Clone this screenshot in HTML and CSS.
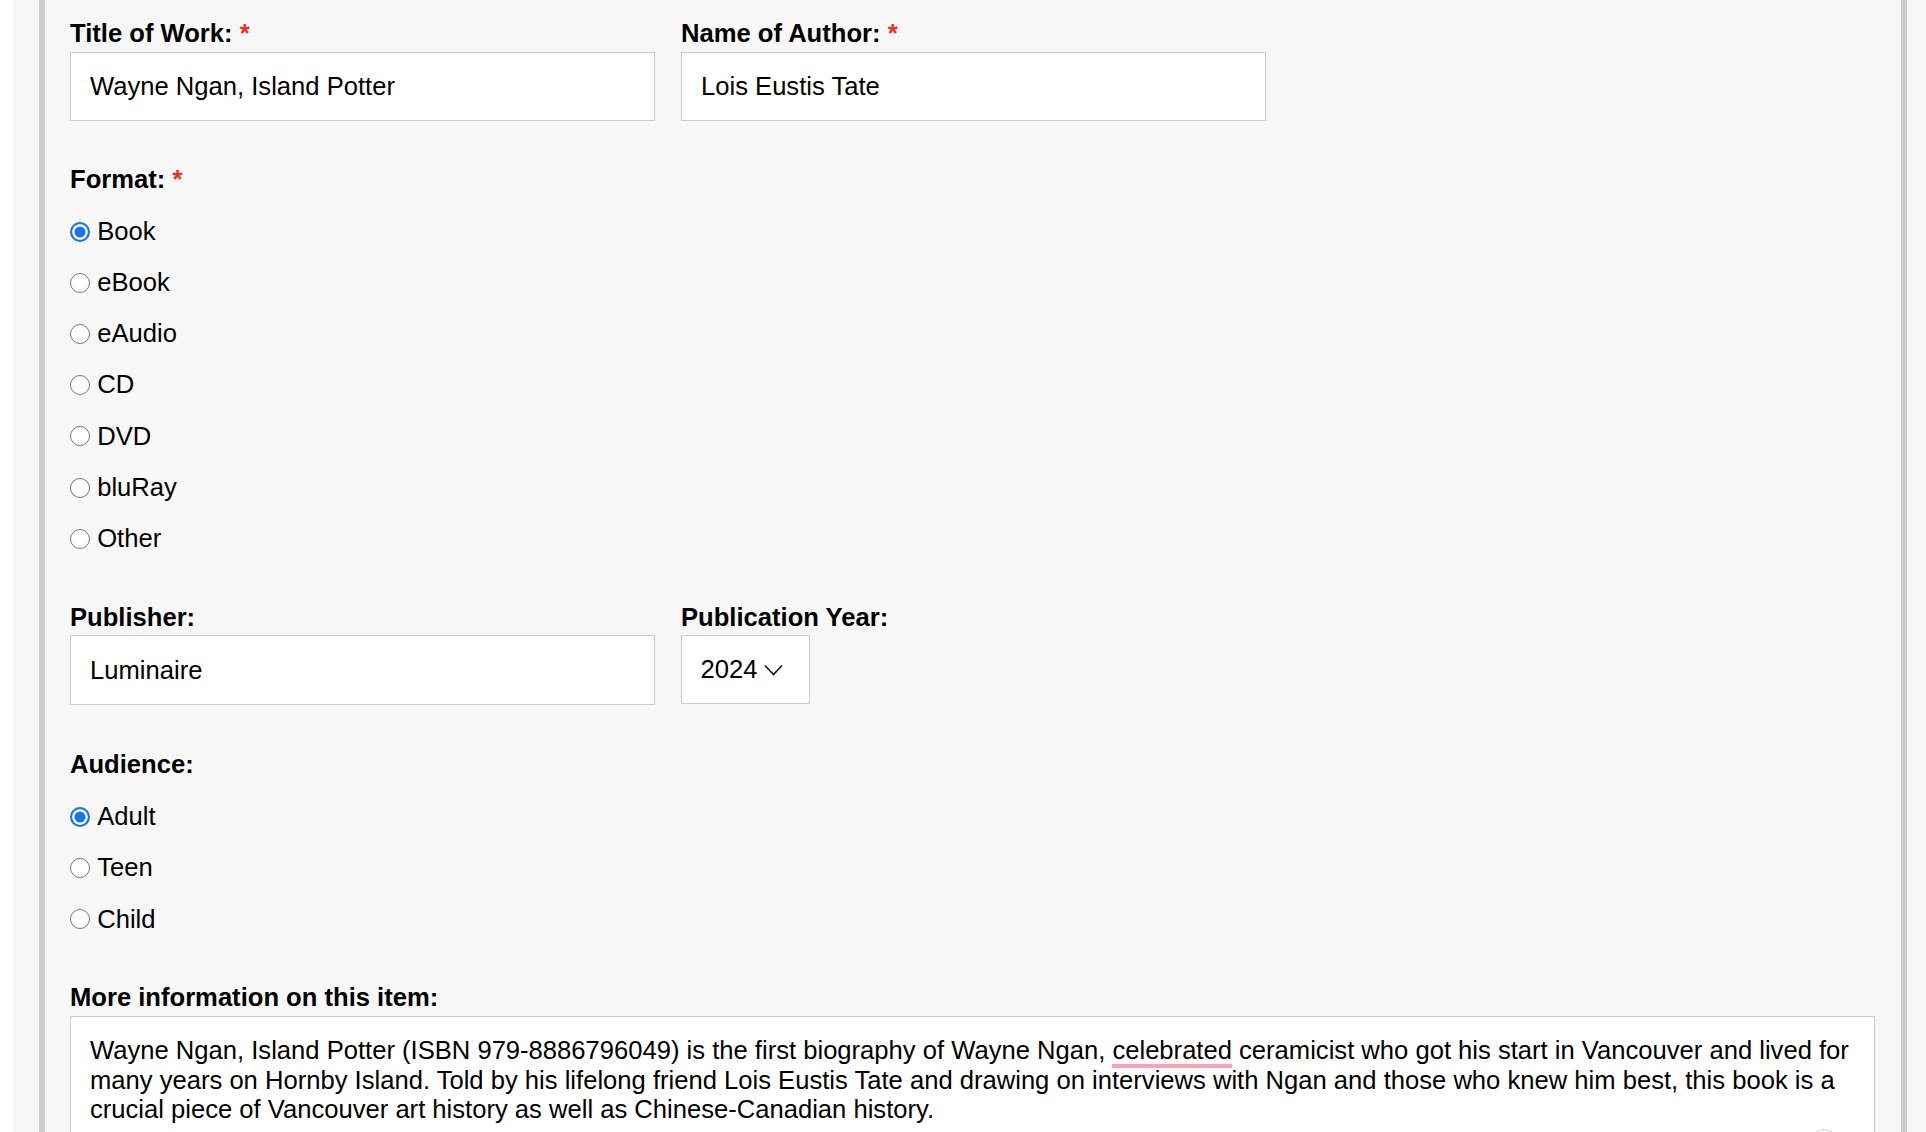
FILE: index.html
```html
<!DOCTYPE html>
<html lang="en">
<head>
    <meta charset="UTF-8">
    <meta name="viewport" content="width=device-width, initial-scale=1.0">
    <title>Suggest an item</title>
    <link rel="stylesheet" href="styles.css">
</head>
<body>
    <div class="page">
        <div class="panel">
            <form class="item-form">
                <div class="row row-first">
                    <div class="field">
                        <label class="field-label" for="title">Title of Work: <span class="req">*</span></label>
                        <input type="text" id="title" class="text-input" value="Wayne Ngan, Island Potter">
                    </div>
                    <div class="field">
                        <label class="field-label" for="author">Name of Author: <span class="req">*</span></label>
                        <input type="text" id="author" class="text-input" value="Lois Eustis Tate">
                    </div>
                </div>

                <div class="group">
                    <div class="field-label">Format: <span class="req">*</span></div>
                    <div class="options">
                        <label class="option"><input type="radio" name="format" checked>Book</label>
                        <label class="option"><input type="radio" name="format">eBook</label>
                        <label class="option"><input type="radio" name="format">eAudio</label>
                        <label class="option"><input type="radio" name="format">CD</label>
                        <label class="option"><input type="radio" name="format">DVD</label>
                        <label class="option"><input type="radio" name="format">bluRay</label>
                        <label class="option"><input type="radio" name="format">Other</label>
                    </div>
                </div>

                <div class="row row-pub">
                    <div class="field">
                        <label class="field-label" for="publisher">Publisher:</label>
                        <input type="text" id="publisher" class="text-input" value="Luminaire">
                    </div>
                    <div class="field">
                        <div class="field-label">Publication Year:</div>
                        <div class="select">
                            <span>2024</span>
                            <svg width="19" height="12" viewBox="0 0 19 12"><polyline points="1,1.5 9.5,10.5 18,1.5" fill="none" stroke="#1a1a1a" stroke-width="1.7"/></svg>
                        </div>
                    </div>
                </div>

                <div class="group">
                    <div class="field-label">Audience:</div>
                    <div class="options">
                        <label class="option"><input type="radio" name="audience" checked>Adult</label>
                        <label class="option"><input type="radio" name="audience">Teen</label>
                        <label class="option"><input type="radio" name="audience">Child</label>
                    </div>
                </div>

                <div class="field">
                    <div class="field-label">More information on this item:</div>
                    <div class="textarea">
                        Wayne Ngan, Island Potter (ISBN 979-8886796049) is the first biography of Wayne Ngan, <span class="misspelt">celebrated</span> ceramicist who got his start in Vancouver and lived for<br>
                        many years on Hornby Island. Told by his lifelong friend Lois Eustis Tate and drawing on interviews with Ngan and those who knew him best, this book is a<br>
                        crucial piece of Vancouver art history as well as Chinese-Canadian history.
                        <span class="assist"></span>
                    </div>
                </div>
            </form>
        </div>
    </div>
</body>
</html>
```

FILE: styles.css
```css
html, body {
    margin: 0;
    background: #fff;
}
body {
    font-family: "Liberation Sans", Arial, sans-serif;
    font-size: 25.6px;
    line-height: 1.15;
    color: #000;
    overflow: hidden;
}
.page {
    margin-left: 13px;
    padding: 0 19px 0 26px;
    background: #f7f7f7;
    min-height: 100vh;
}
.panel {
    border-left: 6px solid #ccc;
    border-right: 6px solid #ccc;
    background: #f7f7f7;
    padding: 19.2px 25.6px 0 25px;
    min-height: 1400px;
}
.row {
    display: flex;
    gap: 26px;
}
.row-first {
    margin-bottom: 43.6px;
}
.row-pub {
    margin-bottom: 45.6px;
}
.field-label {
    display: block;
    font-weight: bold;
    margin-bottom: 3.4px;
}
.req {
    color: #e5321f;
}
.text-input {
    box-sizing: border-box;
    width: 585px;
    height: 69.4px;
    padding: 0 19px;
    margin: 0;
    border: 1px solid #ccc;
    background: #fff;
    font: inherit;
    color: #000;
    outline: none;
}
.group {
    margin-bottom: 38.3px;
}
.group .field-label {
    margin-bottom: 0;
}
.options {
    margin-top: 11.6px;
}
.option {
    display: flex;
    align-items: center;
    height: 51.2px;
}
.option input {
    appearance: none;
    -webkit-appearance: none;
    box-sizing: border-box;
    width: 20px;
    height: 20px;
    margin: 0 7.2px 0 0;
    border: 1.5px solid #767676;
    border-radius: 50%;
    background: #fff;
}
.option input:checked {
    border: 2px solid #1673f2;
    background: #1673f2;
    box-shadow: inset 0 0 0 2.5px #fff;
}
.select {
    box-sizing: border-box;
    display: inline-flex;
    align-items: center;
    gap: 6px;
    height: 69px;
    padding: 0 26px 0 18.6px;
    border: 1px solid #ccc;
    background: #fff;
}
.textarea {
    position: relative;
    box-sizing: border-box;
    width: 1805.3px;
    height: 300px;
    padding: 19px 19px;
    border: 1px solid #ccc;
    background: #fff;
    white-space: nowrap;
}
.misspelt {
    border-bottom: 4px solid #f6a3b4;
}
.assist {
    position: absolute;
    top: 112px;
    right: 36px;
    width: 25px;
    height: 25px;
    border: 1.5px solid #cfd2dc;
    border-radius: 50%;
    background: #fff;
}
```
